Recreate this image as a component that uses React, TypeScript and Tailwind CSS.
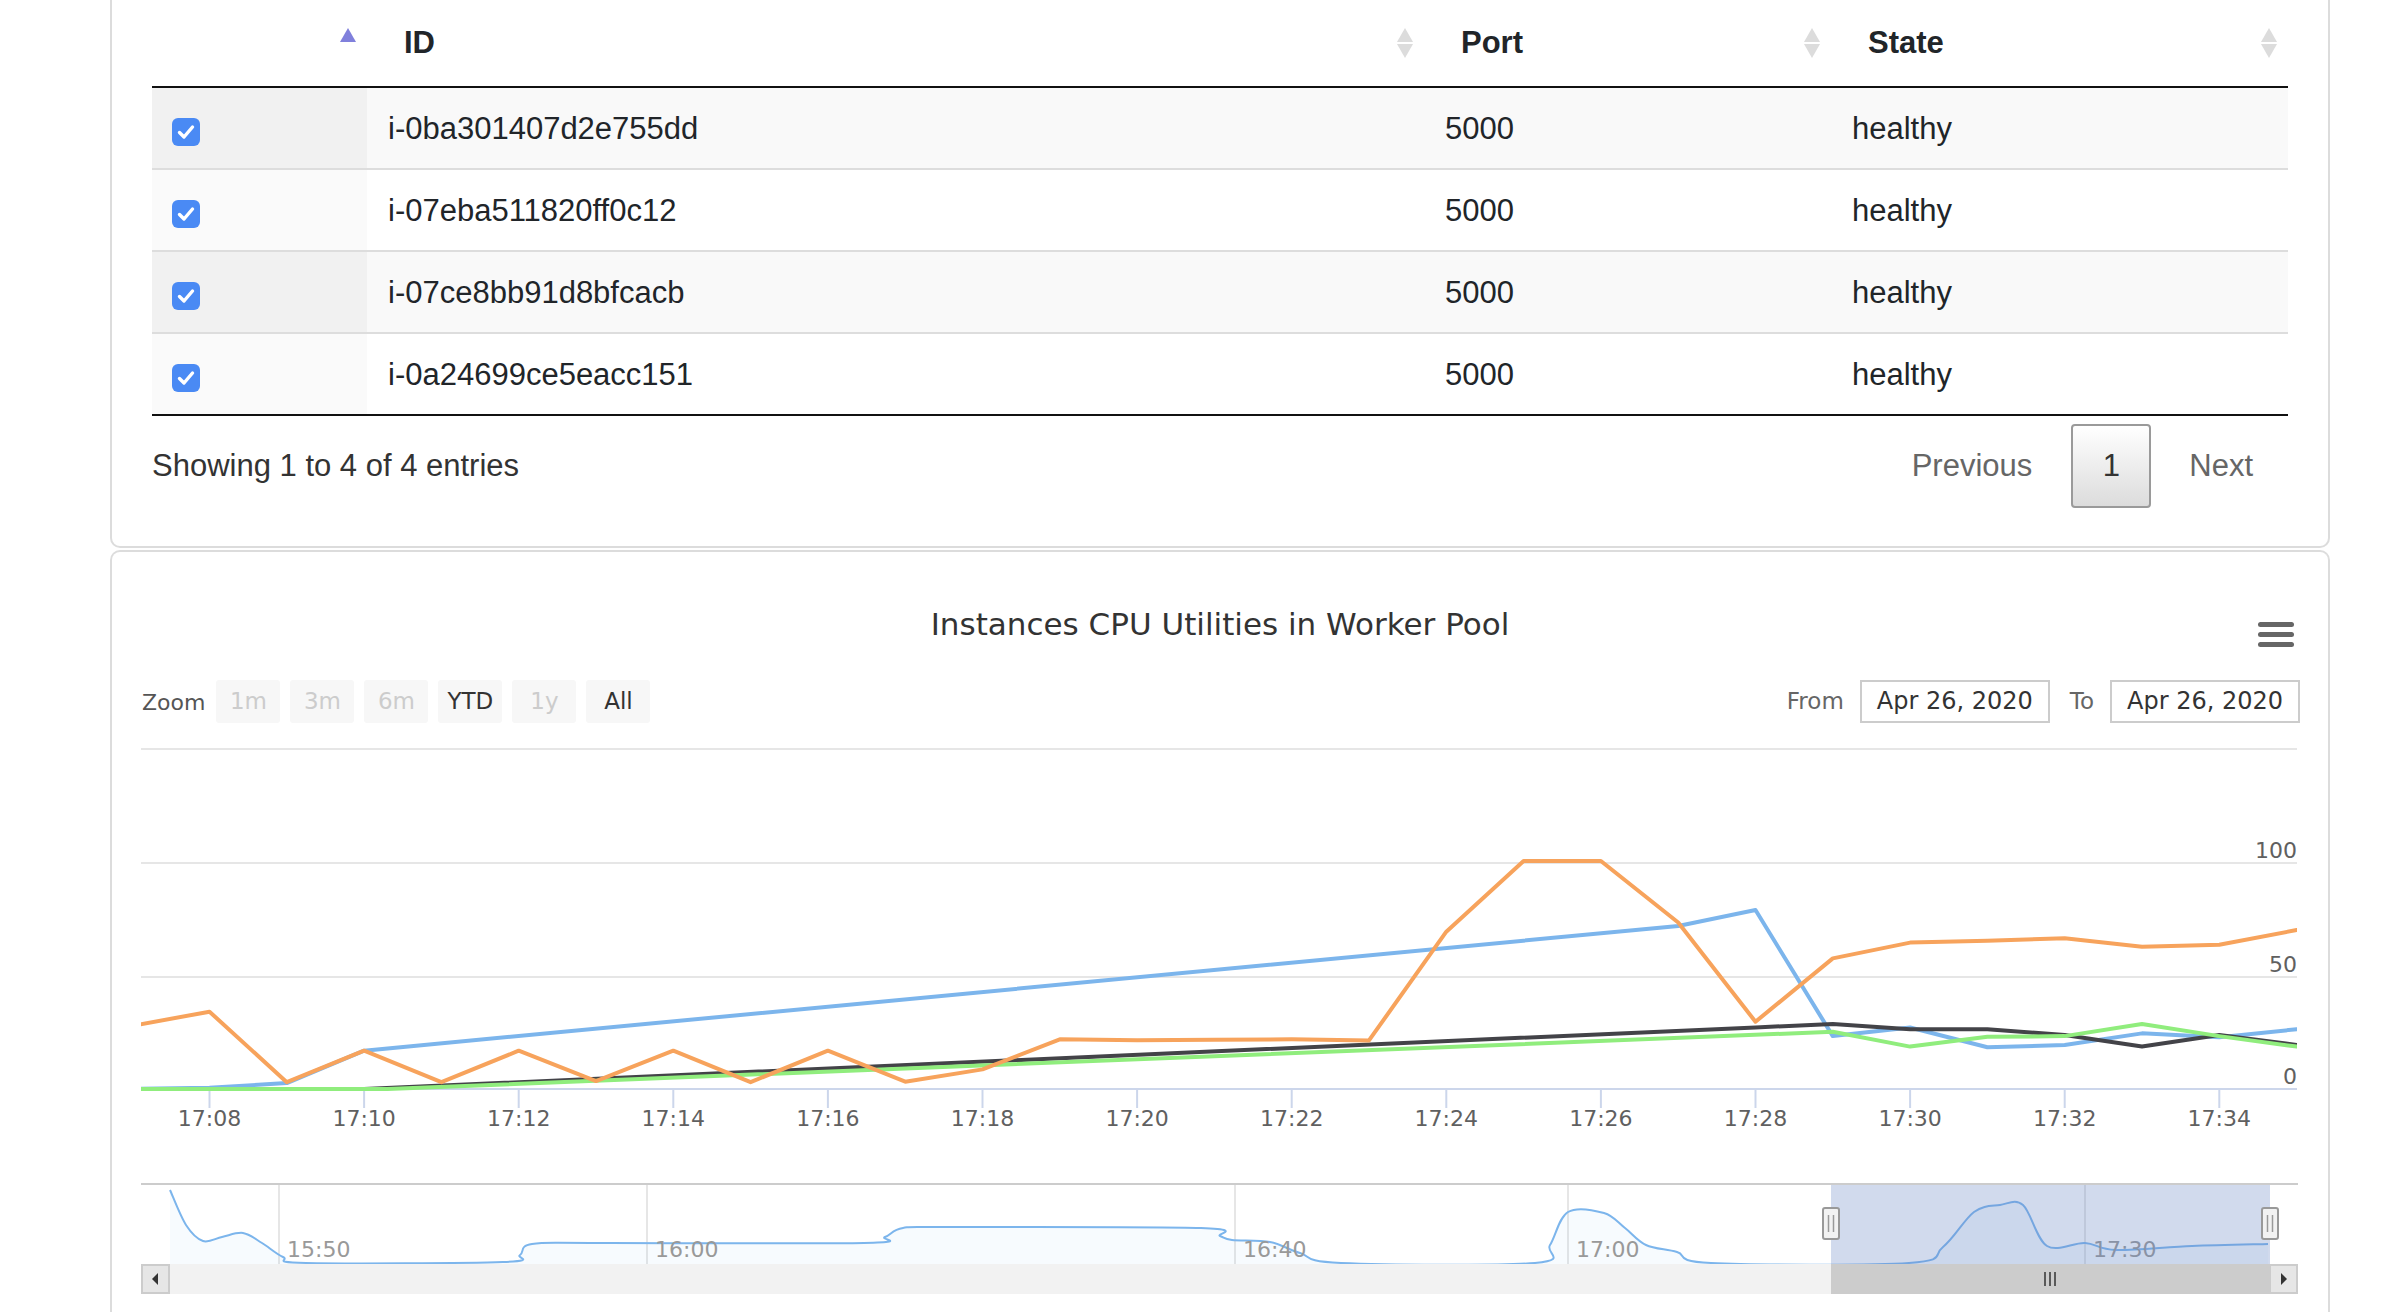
import React from "react";

type Pt = [number, number];

const rows = ["i-0ba301407d2e755dd", "i-07eba511820ff0c12", "i-07ce8bb91d8bfcacb", "i-0a24699ce5eacc151"];

// chart scales, in page pixels
const X = (t: number) => 209.5 + (t - 8) * 77.3;
const Y = (v: number) => 1089 - v * 2.28;

const series: { color: string; data: Pt[] }[] = [
  {
    color: "#7cb5ec",
    data: [[7, 0], [8, 0.5], [9, 2.6], [10, 16.8], [27, 71.5], [28, 78.5], [29, 23.2], [30, 27], [31, 18.3], [32, 19.3], [33, 24.4], [34, 22.7], [35, 26.2]],
  },
  {
    color: "#434348",
    data: [[7, 0], [10, 0], [28, 27], [29, 28.5], [30, 26.2], [31, 26.2], [32, 23.7], [33, 18.6], [34, 23.7], [35, 19.3]],
  },
  {
    color: "#90ed7d",
    data: [[7, 0], [10.3, 0], [29, 25.1], [30, 18.6], [31, 22.9], [32, 23.2], [33, 28.5], [34, 23.2], [35, 18.6]],
  },
  {
    color: "#f7a35c",
    data: [
      [7, 27.7], [8, 33.9], [9, 3], [10, 16.8], [11, 3], [12, 16.8], [13, 3.5], [14, 16.8], [15, 3], [16, 16.8], [17, 3.2],
      [18, 8.6], [19, 21.8], [20, 21.4], [21, 21.6], [22, 21.8], [23, 21.3], [24, 69], [25, 100], [26, 100], [27, 73],
      [28, 29.5], [29, 57.3], [30, 64.2], [31, 65], [32, 66.1], [33, 62.4], [34, 63.3], [35, 69.7],
    ],
  },
];

const nav: Pt[] = [
  [170, 1190], [186, 1225], [203, 1241], [222, 1237], [243, 1233], [262, 1243], [283, 1257], [306, 1263], [503, 1262],
  [520, 1255], [532, 1244], [600, 1243], [864, 1243], [885, 1237], [903, 1228], [950, 1227], [1201, 1228], [1220, 1236],
  [1232, 1240], [1270, 1242], [1300, 1253], [1341, 1263], [1535, 1263], [1550, 1245], [1568, 1212], [1604, 1213],
  [1625, 1228], [1646, 1245], [1677, 1252], [1711, 1263], [1909, 1263], [1943, 1247], [1974, 1212], [2000, 1205],
  [2023, 1205], [2047, 1246], [2085, 1243], [2116, 1250], [2192, 1246], [2268, 1244],
];

function smooth(pts: Pt[]) {
  let d = `M${pts[0][0]},${pts[0][1]}`;
  for (let i = 0; i < pts.length - 1; i++) {
    const p0 = pts[i - 1] || pts[i];
    const p1 = pts[i];
    const p2 = pts[i + 1];
    const p3 = pts[i + 2] || p2;
    const c1: Pt = [p1[0] + (p2[0] - p0[0]) / 6, p1[1] + (p2[1] - p0[1]) / 6];
    const c2: Pt = [p2[0] - (p3[0] - p1[0]) / 6, p2[1] - (p3[1] - p1[1]) / 6];
    d += ` C${c1[0]},${c1[1]} ${c2[0]},${c2[1]} ${p2[0]},${p2[1]}`;
  }
  return d;
}

function SortIcon({ active }: { active?: boolean }) {
  return (
    <svg width="18" height="30" viewBox="0 0 18 30">
      <polygon points="9,0 17,14 1,14" fill={active ? "#8080dc" : "#dcdcdc"} />
      {!active && <polygon points="1,16 17,16 9,30" fill="#dcdcdc" />}
    </svg>
  );
}

function Checkbox() {
  return (
    <div className="mt-[8px] flex h-[28px] w-[28px] items-center justify-center rounded-[6px] bg-[#4a8af4]">
      <svg width="28" height="28" viewBox="0 0 28 28">
        <path d="M7.5 14.5 L12 19 L20.5 9" fill="none" stroke="white" strokeWidth="3.4" strokeLinecap="round" strokeLinejoin="round" />
      </svg>
    </div>
  );
}

function Chart() {
  const ticks = [8, 10, 12, 14, 16, 18, 20, 22, 24, 26, 28, 30, 32, 34];
  const navLine = smooth(nav);
  const navArea = `${navLine} L2268,1264 L170,1264 Z`;
  const font = "DejaVu Sans, sans-serif";
  return (
    <svg width="2216" height="600" viewBox="112 724 2216 600" className="block">
      <defs>
        <clipPath id="plot">
          <rect x="141" y="740" width="2156" height="352" />
        </clipPath>
      </defs>
      {[749, 863, 977].map((y) => (
        <line key={y} x1="141" x2="2297" y1={y} y2={y} stroke="#e6e6e6" strokeWidth="2" />
      ))}
      <line x1="141" x2="2297" y1="1089" y2="1089" stroke="#ccd6eb" strokeWidth="2" />
      {ticks.map((t) => (
        <g key={t}>
          <line x1={X(t)} x2={X(t)} y1="1090" y2="1108" stroke="#ccd6eb" strokeWidth="2" />
          <text x={X(t)} y="1126" textAnchor="middle" fontFamily={font} fontSize="22" fill="#606060">
            {`17:${String(t).padStart(2, "0")}`}
          </text>
        </g>
      ))}
      <text x="2297" y="858" textAnchor="end" fontFamily={font} fontSize="22" fill="#606060">100</text>
      <text x="2297" y="972" textAnchor="end" fontFamily={font} fontSize="22" fill="#606060">50</text>
      <text x="2297" y="1084" textAnchor="end" fontFamily={font} fontSize="22" fill="#606060">0</text>
      <g clipPath="url(#plot)">
        {series.map((s) => (
          <path
            key={s.color}
            d={"M" + s.data.map(([t, v]) => `${X(t)},${Y(v)}`).join(" L")}
            fill="none"
            stroke={s.color}
            strokeWidth="4"
            strokeLinejoin="round"
            strokeLinecap="round"
          />
        ))}
      </g>

      {/* navigator */}
      <line x1="141" x2="2298" y1="1184" y2="1184" stroke="#cccccc" strokeWidth="2" />
      {[279, 647, 1235, 1568, 2085].map((x) => (
        <line key={x} x1={x} x2={x} y1="1185" y2="1264" stroke="#e6e6e6" strokeWidth="2" />
      ))}
      <path d={navArea} fill="rgba(124,181,236,0.06)" />
      <path d={navLine} fill="none" stroke="#7cb5ec" strokeWidth="2" />
      {[
        [287, "15:50"],
        [655, "16:00"],
        [1243, "16:40"],
        [1576, "17:00"],
        [2093, "17:30"],
      ].map(([x, label]) => (
        <text key={label} x={x} y="1257" fontFamily={font} fontSize="22" fill="#999999">
          {label}
        </text>
      ))}
      <rect x="1831" y="1185" width="439" height="79" fill="rgba(102,133,194,0.3)" />
      {[1831, 2270].map((x) => (
        <g key={x}>
          <rect x={x - 8} y="1208" width="16" height="31" rx="2" fill="#f2f2f2" stroke="#999999" strokeWidth="2" />
          <line x1={x - 2.5} x2={x - 2.5} y1="1215" y2="1232" stroke="#999999" strokeWidth="1.5" />
          <line x1={x + 2.5} x2={x + 2.5} y1="1215" y2="1232" stroke="#999999" strokeWidth="1.5" />
        </g>
      ))}

      {/* scrollbar */}
      <rect x="141" y="1264" width="2157" height="30" fill="#f2f2f2" />
      <rect x="1831" y="1264" width="439" height="30" fill="#cccccc" />
      {[2045, 2050, 2055].map((x) => (
        <line key={x} x1={x} x2={x} y1="1272" y2="1286" stroke="#333333" strokeWidth="1.5" />
      ))}
      <rect x="142" y="1265" width="27" height="28" fill="#e6e6e6" stroke="#cccccc" strokeWidth="2" />
      <polygon points="152,1279 158,1273 158,1285" fill="#333333" />
      <rect x="2270" y="1265" width="27" height="28" fill="#e6e6e6" stroke="#cccccc" strokeWidth="2" />
      <polygon points="2287,1279 2281,1273 2281,1285" fill="#333333" />
    </svg>
  );
}

export default function App() {
  const cols = "grid grid-cols-[215px_1057px_407px_457px]";
  const zoomButtons = [
    { label: "1m", on: false },
    { label: "3m", on: false },
    { label: "6m", on: false },
    { label: "YTD", on: true },
    { label: "1y", on: false },
    { label: "All", on: true },
  ];

  return (
    <div className="min-h-screen w-[2384px] overflow-hidden bg-white">
      {/* table card */}
      <div className="ml-[110px] w-[2220px] rounded-b-[10px] border-x-2 border-b-2 border-[#dcdcdc] px-[40px] pb-[38px] font-['Liberation_Sans',Arial,sans-serif] text-[31px] text-[#212529]">
        <div className="border-b-2 border-[#111111]">
          <div className={`${cols} h-[88px] border-b-2 border-[#111111] font-bold`}>
            <div className="flex items-center justify-end pr-[10px]">
              <SortIcon active />
            </div>
            <div className="flex items-center justify-between pl-[37px] pr-[10px]">
              <span>ID</span>
              <SortIcon />
            </div>
            <div className="flex items-center justify-between pl-[37px] pr-[10px]">
              <span>Port</span>
              <SortIcon />
            </div>
            <div className="flex items-center justify-between pl-[37px] pr-[10px]">
              <span>State</span>
              <SortIcon />
            </div>
          </div>
          {rows.map((id, i) => (
            <div
              key={id}
              className={`${cols} ${i === 0 ? "h-[80px]" : "h-[82px] border-t-2 border-[#dddddd]"} ${i % 2 === 0 ? "bg-[#f9f9f9]" : "bg-white"}`}
            >
              <div className={`flex items-center pl-[20px] ${i % 2 === 0 ? "bg-[#f1f1f1]" : "bg-[#fafafa]"}`}>
                <Checkbox />
              </div>
              <div className="flex items-center pl-[21px] pt-[2px]">{id}</div>
              <div className="flex items-center pl-[21px] pt-[2px]">5000</div>
              <div className="flex items-center pl-[21px] pt-[2px]">healthy</div>
            </div>
          ))}
        </div>
        <div className="mt-[8px] flex h-[84px] items-center justify-between">
          <span className="text-[#333333]">Showing 1 to 4 of 4 entries</span>
          <div className="flex items-center text-[#666666]">
            <span className="pr-[39px]">Previous</span>
            <span className="flex h-[84px] w-[80px] items-center justify-center rounded-[4px] border-2 border-[#9a9a9a] bg-gradient-to-b from-white to-[#dcdcdc] text-[#333333]">
              1
            </span>
            <span className="pl-[38px] pr-[35px]">Next</span>
          </div>
        </div>
      </div>

      {/* chart card */}
      <div className="ml-[110px] mt-[2px] h-[780px] w-[2220px] rounded-t-[10px] border-x-2 border-t-2 border-[#dcdcdc] pt-[50px] font-['DejaVu_Sans',sans-serif]">
        <div className="grid grid-cols-[1fr_auto_1fr]">
          <div />
          <div className="h-[44px] text-[31px] leading-[44px] text-[#333333]">Instances CPU Utilities in Worker Pool</div>
          <div className="flex justify-end pr-[34px]">
            <div className="mt-[20px] flex w-[36px] flex-col gap-[5px]">
              <div className="h-[5px] rounded-full bg-[#666666]" />
              <div className="h-[5px] rounded-full bg-[#666666]" />
              <div className="h-[5px] rounded-full bg-[#666666]" />
            </div>
          </div>
        </div>

        <div className="mt-[31px] flex h-[46px] items-center justify-between pl-[30px] pr-[28px]">
          <div className="flex items-center gap-[10px]">
            <span className="mr-[1px] mt-[2px] text-[22px] text-[#555555]">Zoom</span>
            {zoomButtons.map((b) => (
              <span
                key={b.label}
                className={`flex h-[43px] w-[64px] items-center justify-center rounded-[3px] bg-[#f7f7f7] text-[23px] ${b.on ? "text-[#333333]" : "text-[#cccccc]"}`}
              >
                {b.label}
              </span>
            ))}
          </div>
          <div className="flex items-center text-[23px] text-[#666666]">
            <span>From</span>
            <span className="ml-[16px] flex h-[43px] w-[190px] items-center justify-center border-2 border-[#cccccc] text-[24px] text-[#333333]">
              Apr 26, 2020
            </span>
            <span className="ml-[20px]">To</span>
            <span className="ml-[16px] flex h-[43px] w-[190px] items-center justify-center border-2 border-[#cccccc] text-[24px] text-[#333333]">
              Apr 26, 2020
            </span>
          </div>
        </div>

        <Chart />
      </div>
    </div>
  );
}
